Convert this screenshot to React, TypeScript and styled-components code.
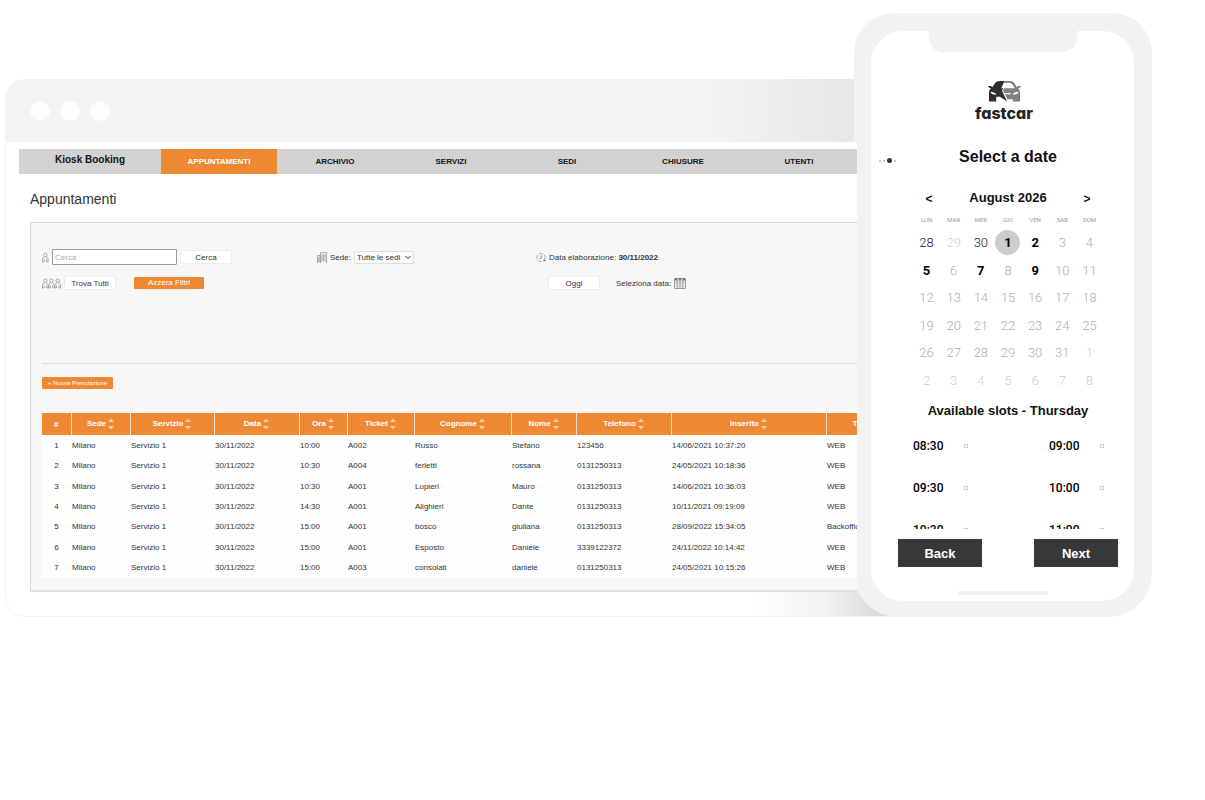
import React, { useState } from "react";
import styled, { createGlobalStyle } from "styled-components";

const GlobalStyle = createGlobalStyle`
  *, *::before, *::after { box-sizing: border-box; }
  body {
    margin: 0;
    background: #fff;
    color: #333;
    font-family: "Liberation Sans", Arial, sans-serif;
    font-size: 8px;
  }
  button, input, select { font: inherit; color: inherit; margin: 0; padding: 0; }
  button { cursor: pointer; }
`;

const ORANGE = "#ee8833";

const Stage = styled.main`
  display: flex;
  align-items: flex-end;
  padding: 13px 53px 40px 5px;
`;

/* Browser window */

const BrowserWindow = styled.section`
  flex: 1;
  min-width: 0;
  margin-right: -41px;
  border: 1px solid #f3f3f3;
  border-top: 0;
  border-radius: 20px 0 0 20px;
  background: linear-gradient(90deg, #fff 84%, #f3f3f3 92%, #dcdcdc 98%);
`;

const WindowBar = styled.div`
  display: flex;
  align-items: center;
  gap: 10px;
  height: 63px;
  padding-left: 24px;
  border-radius: 20px 0 0 0;
  background: linear-gradient(90deg, #f3f3f3 80%, #e7e7e7 95%);
`;

const WindowDot = styled.span`
  width: 20px;
  height: 20px;
  border-radius: 50%;
  background: #fdfdfd;
`;

const WindowBody = styled.div`
  position: relative;
  z-index: 2;
  margin-right: 37px;
  padding: 7px 0 0 13px;
  background: #fff;
`;

const WindowFoot = styled.div`
  height: 24px;
`;

const Nav = styled.nav`
  display: grid;
  grid-template-columns: 142px repeat(6, 1fr);
  height: 25px;
  background: #d2d2d2;
  color: #111;
`;

const Brand = styled.div`
  color: #111;
  font-size: 10px;
  font-weight: 700;
  line-height: 22px;
  text-align: center;
`;

const Tab = styled.a<{ $active?: boolean }>`
  background: ${(p) => (p.$active ? ORANGE : "transparent")};
  color: ${(p) => (p.$active ? "#fff" : "#111")};
  font-weight: 700;
  line-height: 25px;
  text-align: center;
  text-decoration: none;
`;

const PageTitle = styled.h1`
  margin: 0;
  padding: 15px 0 13px 11px;
  font-size: 14px;
  font-weight: 400;
  line-height: 20px;
`;

const Panel = styled.div`
  margin-left: 11px;
  padding: 0 0 12px 11px;
  border: 1px solid #d6d6d6;
  border-right: 0;
  border-bottom: 2px solid #e0e0e0;
  background: #f7f7f7;
`;

const Filters = styled.form`
  display: grid;
  grid-template-columns: 275fr 219fr 321fr;
  height: 141px;
  padding-top: 26px;
  border-bottom: 1px solid #dcdcdc;
`;

const FilterGroup = styled.div`
  display: flex;
  flex-direction: column;
  gap: 10px;
`;

const FilterRow = styled.div<{ $indent?: boolean }>`
  display: flex;
  align-items: center;
  gap: 3px;
  height: 16px;
  padding-left: ${(p) => (p.$indent ? "12px" : "0")};
`;

const SearchInput = styled.input`
  width: 125px;
  height: 16px;
  padding: 0 2px;
  border: 1px solid #999;
  border-radius: 1px;
  background: #fff;
  &::placeholder { color: #aaa; opacity: 1; }
`;

const PlainButton = styled.button`
  width: 52px;
  height: 14px;
  padding-top: 1px;
  border: 1px solid #eee;
  border-radius: 1px;
  background: #fff;
  line-height: 11px;
`;

const OrangeButton = styled.button<{ $small?: boolean }>`
  width: ${(p) => (p.$small ? "71px" : "70px")};
  height: 12px;
  margin-left: ${(p) => (p.$small ? "0" : "15px")};
  border: 0;
  border-radius: 1px;
  background: ${ORANGE};
  color: #fff;
  font-size: ${(p) => (p.$small ? "6px" : "8px")};
  line-height: 12px;
`;

const SelectWrap = styled.span`
  position: relative;
  display: inline-flex;
`;

const SiteSelect = styled.select`
  width: 60px;
  height: 13px;
  padding-left: 2px;
  appearance: none;
  border: 1px solid #ddd;
  border-radius: 1px;
  background: #fcfcfc;
`;

const SelectArrow = styled.svg`
  position: absolute;
  top: 4px;
  right: 3px;
  width: 6px;
  height: 5px;
  pointer-events: none;
`;

const Icon = styled.svg`
  flex: none;
  fill: none;
  stroke: #888;
`;

const IconButton = styled.button`
  display: flex;
  border: 0;
  background: none;
`;

const DateLabel = styled.span`
  margin-left: 13px;
`;

const Actions = styled.div`
  display: flex;
  height: 49px;
  padding-top: 13px;
`;

const TableWrap = styled.div`
  overflow: hidden;
`;

const Table = styled.table`
  width: 100%;
  height: 165px;
  table-layout: fixed;
  border-collapse: collapse;
  background: #fefefe;
`;

const Th = styled.th<{ $first?: boolean; $last?: boolean }>`
  height: 22px;
  padding: ${(p) => (p.$last ? "0 0 0 26px" : "0")};
  overflow: hidden;
  border-left: ${(p) => (p.$first ? "0" : "1px solid #fbe0c8")};
  background: ${ORANGE};
  color: #fff;
  font-weight: 700;
  text-align: ${(p) => (p.$last ? "left" : "center")};
  white-space: nowrap;
`;

const Td = styled.td<{ $center?: boolean }>`
  padding: ${(p) => (p.$center ? "0" : "0 0 0 1px")};
  overflow: hidden;
  text-align: ${(p) => (p.$center ? "center" : "left")};
  white-space: nowrap;
`;

const SortMark = styled.svg`
  margin-left: 2px;
  width: 6px;
  height: 12px;
  fill: #f9cfa6;
  vertical-align: middle;
`;

/* Phone */

const Phone = styled.section`
  position: relative;
  z-index: 1;
  flex: 0 0 298px;
  padding: 18px 18px 16px 17px;
  border-radius: 40px 40px 44px 44px;
  background: #f2f2f2;
`;

const Screen = styled.div`
  display: flex;
  flex-direction: column;
  border-radius: 32px;
  background: #fff;
  overflow: hidden;
`;

const Notch = styled.div`
  align-self: center;
  width: 148px;
  height: 21px;
  border-radius: 0 0 14px 14px;
  background: #f2f2f2;
`;

const Logo = styled.div`
  display: flex;
  flex-direction: column;
  align-items: center;
  padding: 29px 0 0 3px;
`;

const LogoText = styled.div`
  color: #222;
  font-family: Inter, "Liberation Sans", sans-serif;
  font-feature-settings: "cv11";
  font-size: 16px;
  font-weight: 800;
  line-height: 22px;
`;

const StepRow = styled.div`
  display: grid;
  grid-template-columns: 19px 1fr;
  align-items: center;
  padding: 22px 0 0 8px;
`;

const Steps = styled.div`
  display: flex;
  align-items: center;
  gap: 2px;
  padding-top: 7px;
`;

const StepDot = styled.span<{ $current?: boolean }>`
  width: ${(p) => (p.$current ? "5px" : "2px")};
  height: ${(p) => (p.$current ? "5px" : "2px")};
  border-radius: 50%;
  background: ${(p) => (p.$current ? "#333" : "#bbb")};
`;

const StepTitle = styled.h2`
  margin: 0;
  padding-right: 16px;
  color: #111;
  font-size: 16px;
  font-weight: 700;
  line-height: 22px;
  text-align: center;
`;

const Booking = styled.div`
  padding: 0 16px 0 27px;
  color: #111;
`;

const Calendar = styled.div`
  padding: 19px 15px 0;
`;

const MonthRow = styled.div`
  display: flex;
  justify-content: space-between;
  height: 24px;
  font-size: 13px;
  font-weight: 700;
  line-height: 22px;
`;

const MonthButton = styled.button`
  width: 32px;
  border: 0;
  background: none;
  font-size: 12px;
  line-height: 24px;
`;

const Week = styled.div`
  display: grid;
  grid-template-columns: repeat(7, 1fr);
  grid-template-rows: 18px repeat(6, 1fr);
  place-items: center;
  height: 183px;
`;

const WeekDay = styled.span`
  color: #999;
  font-family: Roboto, sans-serif;
  font-size: 6px;
  line-height: 18px;
`;

type DayTone = "edge" | "free" | "off" | "faint" | "picked";

const dayColor: Record<DayTone, string> = {
  edge: "#222",
  free: "#000",
  picked: "#000",
  off: "#b0b0b0",
  faint: "#cccccc",
};

const Day = styled.button<{ $tone: DayTone }>`
  width: 25px;
  height: 25px;
  border: 0;
  border-radius: 50%;
  background: ${(p) => (p.$tone === "picked" ? "#cdcdcd" : "transparent")};
  color: ${(p) => dayColor[p.$tone]};
  font-family: Roboto, sans-serif;
  font-size: 13px;
  font-weight: ${(p) => (p.$tone === "free" || p.$tone === "picked" ? 700 : 300)};
  line-height: 25px;
`;

const SlotsTitle = styled.h3`
  margin: 0;
  font-size: 13px;
  font-weight: 700;
  line-height: 22px;
  text-align: center;
  padding-top: 6px;
`;

const Slots = styled.div`
  display: grid;
  grid-template-columns: 136px 1fr;
  grid-auto-rows: 42px;
  height: 107px;
  padding: 3px 0 0 15px;
  overflow: hidden;
`;

const Slot = styled.label`
  display: flex;
  align-items: center;
  gap: 21px;
  color: #000;
  font-family: Roboto, sans-serif;
  font-size: 12px;
  font-weight: 500;
`;

const SlotCheck = styled.input`
  width: 4px;
  height: 4px;
  appearance: none;
  border: 1px solid #ccc;
`;

const Footer = styled.div`
  display: flex;
  justify-content: space-between;
  padding-top: 10px;
`;

const FooterButton = styled.button`
  width: 84px;
  height: 28px;
  border: 0;
  background: #383838;
  color: #fff;
  font-size: 13px;
  font-weight: 700;
`;

const HomeBar = styled.div`
  align-self: center;
  width: 90px;
  height: 4px;
  margin: 24px 0 6px;
  border-radius: 2px;
  background: #f0f0f0;
`;

const tabs = ["APPUNTAMENTI", "ARCHIVIO", "SERVIZI", "SEDI", "CHIUSURE", "UTENTI"];

const columns: [string, number][] = [
  ["#", 29], ["Sede", 59], ["Servizio", 84], ["Data", 85], ["Ora", 48], ["Ticket", 67],
  ["Cognome", 97], ["Nome", 65], ["Telefono", 95], ["Inserito", 155], ["Tipo", 31],
];

const bookings = [
  ["10:00", "A002", "Russo", "Stefano", "123456", "14/06/2021 10:37:20", "WEB"],
  ["10:30", "A004", "ferletti", "rossana", "0131250313", "24/05/2021 10:18:36", "WEB"],
  ["10:30", "A001", "Lupieri", "Mauro", "0131250313", "14/06/2021 10:36:03", "WEB"],
  ["14:30", "A001", "Alighieri", "Dante", "0131250313", "10/11/2021 09:19:09", "WEB"],
  ["15:00", "A001", "bosco", "giuliana", "0131250313", "28/09/2022 15:34:05", "Backoffice"],
  ["15:00", "A001", "Esposto", "Daniele", "3339122372", "24/11/2022 10:14:42", "WEB"],
  ["15:00", "A003", "consolati", "daniele", "0131250313", "24/05/2021 10:15:26", "WEB"],
];

const weekDays = ["LUN", "MAR", "MER", "GIO", "VEN", "SAB", "DOM"];
const freeDays = [2, 5, 7, 9];
const slots = ["08:30", "09:00", "09:30", "10:00", "10:30", "11:00"];

/* The grid opens on day 28 of the month before, which has 30 days. */
const days = Array.from({ length: 42 }, (_, i): { label: number; tone: DayTone } => {
  const n = i - 2;
  if (n < 1) return { label: n + 30, tone: n === 0 || n === -2 ? "edge" : "faint" };
  if (n > 31) return { label: n - 31, tone: "faint" };
  if (n === 1) return { label: n, tone: "picked" };
  return { label: n, tone: freeDays.includes(n) ? "free" : "off" };
});

const PersonPath =
  "M3.300 1a1.700 1.900 0 1 1 0 3.800a1.700 1.900 0 1 1 0-3.800M2.300 4.800C1 5.300.5 6.300.5 8v2h1.300M4.300 4.800C5.600 5.300 6.100 6.300 6.100 8v2H4.800M2.100 7.500V10M4.500 7.500V10";

const PersonIcon = () => (
  <Icon width="7" height="11" viewBox="0 0 7 11" strokeWidth="0.7"><path d={PersonPath} /></Icon>
);

const PeopleIcon = () => (
  <Icon width="19" height="11" viewBox="0 0 19 11" strokeWidth="0.7">
    <path d={PersonPath} />
    <path d={PersonPath} transform="translate(6.200 0)" />
    <path d={PersonPath} transform="translate(12.400 0)" />
  </Icon>
);

const BuildingIcon = () => (
  <Icon width="10" height="11" viewBox="0 0 10 11" strokeWidth="0.7">
    <path d="M.5 11V3.500h2.500V11M3.500 11V.6h6V11M5 2.500v7M6.500 2v7.500M8 2.500v7M1.700 5v5" />
  </Icon>
);

const ClockIcon = () => (
  <Icon width="10" height="11" viewBox="0 0 11 11" strokeWidth="0.8">
    <circle cx="5.500" cy="5.500" r="4.600" strokeDasharray="5 1.200 3 .9 1.500 .9" />
    <path d="M5.800 2.800v3L4.500 7.200M8.300 8.500h1.500v1.500" stroke="#555" />
  </Icon>
);

const CalendarIcon = () => (
  <Icon width="12" height="12" viewBox="0 0 12 12" strokeWidth="0.8">
    <path d="M.5 1.500h11v10H.5zM.5 4h11M3.200 4v7.500M6 4v7.500M8.800 4v7.500" />
    <path d="M.5 6.500h11M.5 9h11" strokeOpacity="0.4" />
    <path d="M1 1.200h2.500v2H1zM4.800 1.200h2.400v2H4.800zM8.500 1.200H11v2H8.500z" fill="#777" stroke="none" />
  </Icon>
);

const CarLogo = () => (
  <svg width="33" height="21" viewBox="0 0 33 21" aria-hidden="true">
    <path fill="#2d2d2d" d="M0 5h3l1.200 1.200L7 2.200C8 .8 9.500.2 12 .1L16.500 0l-3.300 7.300h2.200L14 9.500l5 11-7-4.700H8.200v4.700H1v-9c0-1.800.8-3.300 2.200-4.300C1.600 7.200.5 6.500 0 5z" />
    <path fill="#fff" d="M2.300 10.800c2.500 0 4.800.8 6.200 2.800-3 .2-5.500-.6-6.200-2.800z" />
    <path fill="#808080" d="M16.500 0h4.700c2.600.1 4 .7 5 2.100l2.700 4.100L30 5h3c-.5 1.500-1.600 2.200-3.200 2.200 1.400 1 2.200 2.500 2.200 4.300v9h-7.200v-2.300h-5.300l-2.600-5h5.300l.8-1.200h-6.800L15 9.500l1.200-2.200h10.600l-1.900-3c-.8-1.700-1.800-2.500-4-2.600H15.700z" />
    <path fill="#fff" d="M30.700 10.800c-2.500 0-4.800.8-6.200 2.800 3 .2 5.500-.6 6.200-2.800z" />
  </svg>
);

const SortIcon = () => (
  <SortMark viewBox="0 0 6 12" aria-hidden="true"><path d="M3 .5 6 4H0zM3 11.500 6 8H0z" /></SortMark>
);

export default function App() {
  const [query, setQuery] = useState("");
  return (
    <>
      <GlobalStyle />
      <Stage>
        <BrowserWindow>
          <WindowBar><WindowDot /><WindowDot /><WindowDot /></WindowBar>
          <WindowBody>
            <Nav>
              <Brand>Kiosk Booking</Brand>
              {tabs.map((t, i) => <Tab key={t} href="#" $active={i === 0}>{t}</Tab>)}
            </Nav>
            <PageTitle>Appuntamenti</PageTitle>
            <Panel>
              <Filters onSubmit={(e) => e.preventDefault()}>
                <FilterGroup>
                  <FilterRow>
                    <PersonIcon />
                    <SearchInput aria-label="Cerca" placeholder="Cerca" value={query} onChange={(e) => setQuery(e.target.value)} />
                    <PlainButton>Cerca</PlainButton>
                  </FilterRow>
                  <FilterRow>
                    <PeopleIcon />
                    <PlainButton type="button">Trova Tutti</PlainButton>
                    <OrangeButton type="button">Azzera Filtri</OrangeButton>
                  </FilterRow>
                </FilterGroup>
                <FilterGroup>
                  <FilterRow>
                    <BuildingIcon />
                    <label htmlFor="sede">Sede:</label>
                    <SelectWrap>
                      <SiteSelect id="sede"><option>Tutte le sedi</option></SiteSelect>
                      <SelectArrow viewBox="0 0 6 5"><path d="M.5 1 3 3.500 5.500 1" fill="none" stroke="#333" /></SelectArrow>
                    </SelectWrap>
                  </FilterRow>
                </FilterGroup>
                <FilterGroup>
                  <FilterRow>
                    <ClockIcon />
                    <span>Data elaborazione: <b>30/11/2022</b></span>
                  </FilterRow>
                  <FilterRow $indent>
                    <PlainButton type="button">Oggi</PlainButton>
                    <DateLabel>Seleziona data:</DateLabel>
                    <IconButton type="button" aria-label="Seleziona data"><CalendarIcon /></IconButton>
                  </FilterRow>
                </FilterGroup>
              </Filters>
              <Actions>
                <OrangeButton $small type="button">+ Nuova Prenotazione</OrangeButton>
              </Actions>
              <TableWrap>
                <Table>
                  <colgroup>{columns.map(([c, w]) => <col key={c} width={w} />)}</colgroup>
                  <thead>
                    <tr>
                      {columns.map(([c], i) => (
                        <Th key={c} $first={i === 0} $last={i === columns.length - 1}>
                          {c}{i > 0 && <SortIcon />}
                        </Th>
                      ))}
                    </tr>
                  </thead>
                  <tbody>
                    {bookings.map((b, i) => (
                      <tr key={i}>
                        <Td $center>{i + 1}</Td>
                        <Td>Milano</Td>
                        <Td>Servizio 1</Td>
                        <Td>30/11/2022</Td>
                        {b.map((v, j) => <Td key={j}>{v}</Td>)}
                      </tr>
                    ))}
                  </tbody>
                </Table>
              </TableWrap>
            </Panel>
          </WindowBody>
          <WindowFoot />
        </BrowserWindow>

        <Phone>
          <Screen>
            <Notch />
            <Logo><CarLogo /><LogoText>fastcar</LogoText></Logo>
            <StepRow>
              <Steps><StepDot /><StepDot /><StepDot $current /><StepDot /></Steps>
              <StepTitle>Select a date</StepTitle>
            </StepRow>
            <Booking>
              <Calendar>
                <MonthRow>
                  <MonthButton aria-label="Previous month">&lt;</MonthButton>
                  <span>August 2026</span>
                  <MonthButton aria-label="Next month">&gt;</MonthButton>
                </MonthRow>
                <Week>
                  {weekDays.map((d) => <WeekDay key={d}>{d}</WeekDay>)}
                  {days.map((d, i) => <Day key={i} $tone={d.tone}>{d.label}</Day>)}
                </Week>
              </Calendar>
              <SlotsTitle>Available slots - Thursday</SlotsTitle>
              <Slots>
                {slots.map((s) => <Slot key={s}>{s}<SlotCheck type="checkbox" /></Slot>)}
              </Slots>
              <Footer>
                <FooterButton>Back</FooterButton>
                <FooterButton>Next</FooterButton>
              </Footer>
            </Booking>
            <HomeBar />
          </Screen>
        </Phone>
      </Stage>
    </>
  );
}
